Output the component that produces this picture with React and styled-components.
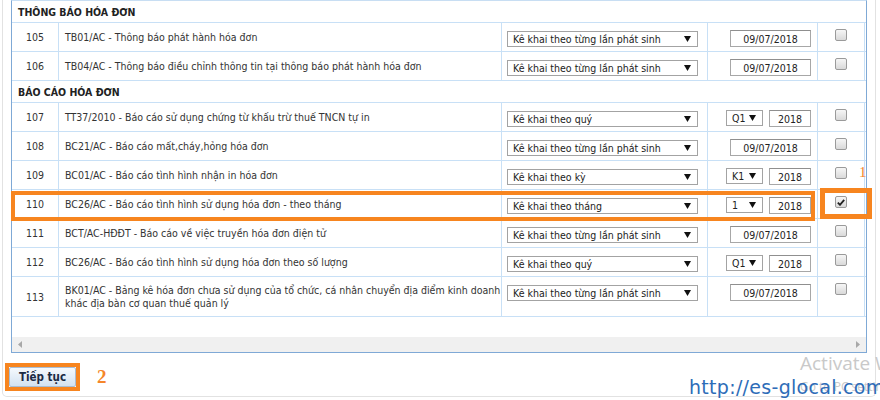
import styled, { createGlobalStyle } from "styled-components";

const GlobalStyle = createGlobalStyle`
  html, body {
    margin: 0;
    padding: 0;
    background: #ffffff;
  }
  body {
    font-family: "DejaVu Sans Condensed", "Liberation Sans", sans-serif;
    font-size: 10.5px;
    color: #333;
  }
`;

const sections = [
  {
    title: "THÔNG BÁO HÓA ĐƠN",
    items: [
      { no: 105, name: ["TB01/AC - Thông báo phát hành hóa đơn"], mode: "Kê khai theo từng lần phát sinh", date: "09/07/2018" },
      { no: 106, name: ["TB04/AC - Thông báo điều chỉnh thông tin tại thông báo phát hành hóa đơn"], mode: "Kê khai theo từng lần phát sinh", date: "09/07/2018" },
    ],
  },
  {
    title: "BÁO CÁO HÓA ĐƠN",
    items: [
      { no: 107, name: ["TT37/2010 - Báo cáo sử dụng chứng từ khấu trừ thuế TNCN tự in"], mode: "Kê khai theo quý", term: "Q1", year: "2018" },
      { no: 108, name: ["BC21/AC - Báo cáo mất,cháy,hỏng hóa đơn"], mode: "Kê khai theo từng lần phát sinh", date: "09/07/2018" },
      { no: 109, name: ["BC01/AC - Báo cáo tình hình nhận in hóa đơn"], mode: "Kê khai theo kỳ", term: "K1", year: "2018" },
      { no: 110, name: ["BC26/AC - Báo cáo tình hình sử dụng hóa đơn - theo tháng"], mode: "Kê khai theo tháng", term: "1", year: "2018", checked: true },
      { no: 111, name: ["BCT/AC-HĐĐT - Báo cáo về việc truyền hóa đơn điện tử"], mode: "Kê khai theo từng lần phát sinh", date: "09/07/2018" },
      { no: 112, name: ["BC26/AC - Báo cáo tình hình sử dụng hóa đơn theo số lượng"], mode: "Kê khai theo quý", term: "Q1", year: "2018" },
      {
        no: 113,
        name: [
          "BK01/AC - Bảng kê hóa đơn chưa sử dụng của tổ chức, cá nhân chuyển địa điểm kinh doanh",
          "khác địa bàn cơ quan thuế quản lý",
        ],
        mode: "Kê khai theo từng lần phát sinh",
        date: "09/07/2018",
      },
    ],
  },
];

const Page = styled.div`
  position: relative;
  width: 880px;
  height: 400px;
  overflow: hidden;
`;

const Panel = styled.div`
  margin-left: 2px;
  width: 874px;
  height: 397px;
  box-sizing: border-box;
  border: 1px solid #e2e2e2;
  border-top: none;
  border-radius: 0 0 5px 5px;
  padding-left: 8px;
`;

const Frame = styled.div`
  position: relative;
  width: 856px;
  box-sizing: border-box;
  border: 1px solid #7fa9d6;
  border-top-color: #c8def3;
`;

const Row = styled.div`
  display: grid;
  grid-template-columns: 46px 443px 206px 110px 48px;
  height: ${(p) => p.h}px;
  box-sizing: border-box;
  border-bottom: 1px solid #c8e0f6;
`;

const SectionRow = styled.div`
  height: 22px;
  box-sizing: border-box;
  border-bottom: 1px solid #c8e0f6;
  display: flex;
  align-items: center;
  padding-left: 6px;
  font-weight: bold;
  color: #222;
`;

const Cell = styled.div`
  display: flex;
  align-items: ${(p) => (p.top ? "flex-start" : "center")};
  justify-content: ${(p) => p.justify || "flex-start"};
  padding: ${(p) => p.pad || "0"};
  box-sizing: border-box;
  border-left: ${(p) => (p.first ? "none" : "1px solid #c8e0f6")};
  border-right: ${(p) => (p.last ? "1px solid #c8e0f6" : "none")};
  overflow: hidden;
`;

const Name = styled.div`
  line-height: 13px;
  white-space: nowrap;
`;

const SelectBox = styled.div`
  display: flex;
  align-items: center;
  justify-content: space-between;
  width: ${(p) => p.w}px;
  height: 16px;
  box-sizing: border-box;
  border: 1px solid #a3a3a3;
  background: #fff;
  padding: 0 6px 0 5px;
  color: #222;
  white-space: nowrap;
`;

const InputBox = styled.div`
  display: flex;
  align-items: center;
  justify-content: center;
  width: ${(p) => p.w}px;
  height: 17px;
  box-sizing: border-box;
  border: 1px solid #a7a7a7;
  border-top-color: #8f8f8f;
  background: #fff;
  color: #222;
`;

const TermSlot = styled.div`
  width: 43px;
`;

const Check = styled.div`
  width: 12px;
  height: 12px;
  box-sizing: border-box;
  border: 1px solid #9a9a9a;
  border-radius: 2px;
  background: linear-gradient(#f6f6f6, #d9d9d9);
  display: flex;
  align-items: center;
  justify-content: center;
`;

const Spacer = styled.div`
  height: 20px;
`;

const Scrollbar = styled.div`
  height: 15px;
  background: #f0f0f0;
  display: flex;
  align-items: center;
  justify-content: space-between;
  padding: 0 6px;
`;

const Highlight = styled.div`
  position: absolute;
  left: ${(p) => p.x}px;
  top: ${(p) => p.y}px;
  width: ${(p) => p.w}px;
  height: ${(p) => p.h}px;
  box-sizing: border-box;
  border: ${(p) => p.t}px solid #f7851f;
  pointer-events: none;
`;

const Mark = styled.div`
  position: absolute;
  left: ${(p) => p.x}px;
  top: ${(p) => p.y}px;
  font-family: "Liberation Serif", serif;
  font-size: ${(p) => p.size}px;
  font-weight: ${(p) => (p.bold ? "bold" : "normal")};
  color: #f5862a;
`;

const Footer = styled.div`
  position: relative;
  margin-top: 10px;
  margin-left: -6px;
`;

const ButtonFrame = styled.div`
  display: inline-flex;
  border: 4px solid #f7851f;
`;

const Button = styled.div`
  width: 67px;
  height: 20px;
  box-sizing: border-box;
  display: flex;
  align-items: center;
  justify-content: center;
  border: 1px solid #a9bdd3;
  border-radius: 2px;
  background: linear-gradient(#f5f9fd, #d3e2f1);
  font-size: 11.5px;
  font-weight: bold;
  color: #1b2a44;
`;

const Watermark = styled.div`
  position: absolute;
  left: ${(p) => p.x}px;
  top: ${(p) => p.y}px;
  font-family: "Open Sans", "Noto Sans", sans-serif;
  font-size: ${(p) => p.size}px;
  color: #c9c9c9;
  white-space: nowrap;
`;

const Url = styled.div`
  position: absolute;
  left: 689px;
  top: 376px;
  font-family: "DejaVu Sans", sans-serif;
  font-size: 19px;
  letter-spacing: 0.3px;
  color: #2d6cb8;
  white-space: nowrap;
`;

const Arrow = () => (
  <svg width="7" height="6" viewBox="0 0 7 6">
    <path d="M0 0H7L3.5 6Z" fill="#111" />
  </svg>
);

const Select = ({ w, children }) => (
  <SelectBox w={w}>
    <span>{children}</span>
    <Arrow />
  </SelectBox>
);

const ScrollArrow = ({ dir }) => (
  <svg width="4" height="7" viewBox="0 0 4 7">
    <path d={dir === "left" ? "M4 0V7L0 3.5Z" : "M0 0V7L4 3.5Z"} fill="#a8a8a8" />
  </svg>
);

const ItemRow = ({ item }) => (
  <Row h={item.name.length > 1 ? 40 : 29}>
    <Cell first justify="center">{item.no}</Cell>
    <Cell pad="0 0 0 6px">
      <div>
        {item.name.map((line) => (
          <Name key={line}>{line}</Name>
        ))}
      </div>
    </Cell>
    <Cell top pad="8px 0 0 5px">
      <Select w={191}>{item.mode}</Select>
    </Cell>
    <Cell top justify="flex-end" pad="7px 6px 0 0">
      {item.date ? (
        <InputBox w={81}>{item.date}</InputBox>
      ) : (
        <>
          <TermSlot>
            <Select w={37}>{item.term}</Select>
          </TermSlot>
          <InputBox w={42}>{item.year}</InputBox>
        </>
      )}
    </Cell>
    <Cell last top justify="center" pad="6px 0 0 0">
      <Check>
        {item.checked && (
          <svg width="8" height="7" viewBox="0 0 8 7">
            <path d="M0.8 3.6L3 5.8L7.2 0.8" stroke="#222" strokeWidth="1.8" fill="none" />
          </svg>
        )}
      </Check>
    </Cell>
  </Row>
);

export default function App() {
  return (
    <Page>
      <GlobalStyle />
      <Panel>
        <Frame>
          {sections.map((section) => (
            <div key={section.title}>
              <SectionRow>{section.title}</SectionRow>
              {section.items.map((item) => (
                <ItemRow key={item.no} item={item} />
              ))}
            </div>
          ))}
          <Spacer />
          <Scrollbar>
            <ScrollArrow dir="left" />
            <ScrollArrow dir="right" />
          </Scrollbar>
          <Highlight x={-1} y={190} w={804} h={30} t={4} />
          <Highlight x={808} y={187} w={52} h={31} t={5} />
          <Mark x={847} y={163} size={15}>1</Mark>
        </Frame>
        <Footer>
          <ButtonFrame>
            <Button>Tiếp tục</Button>
          </ButtonFrame>
          <Mark x={92} y={3} size={19} bold>2</Mark>
        </Footer>
      </Panel>
      <Watermark x={800} y={350} size={19}>Activate Windows</Watermark>
      <Watermark x={800} y={378} size={12}>Go to PC settings to activate Windows.</Watermark>
      <Url>http://es-glocal.com</Url>
    </Page>
  );
}
